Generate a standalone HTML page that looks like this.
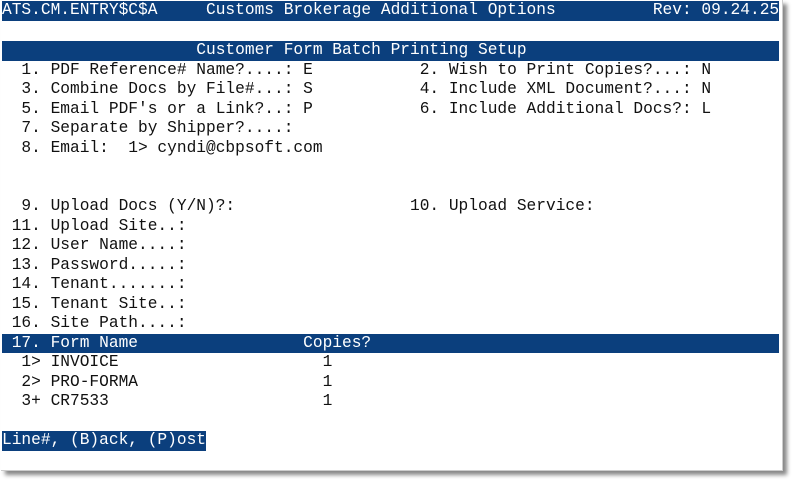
<!DOCTYPE html>
<html><head><meta charset="utf-8"><style>
html,body{margin:0;padding:0;background:#fff;width:792px;height:480px;overflow:hidden}
#win{position:absolute;left:1px;top:0;width:781px;height:470px;background:#fff;box-shadow:4px 4px 4px #888;border-right:1px solid #ccc;border-bottom:1px solid #ccc}
pre{position:absolute;left:2px;margin:0;font-family:"Liberation Mono",monospace;font-size:16.2px;line-height:19.55px;height:19.55px;color:#111;white-space:pre}
.bar{background:#0b3f7d;color:#fff;width:777px}
.b2{background:#0b3f7d;color:#fff}
</style></head><body><div id="win"></div>
<pre class="bar" style="top:1px">ATS.CM.ENTRY$C$A     Customs Brokerage Additional Options          Rev: 09.24.25</pre>
<pre class="bar" style="top:41px">                    Customer Form Batch Printing Setup</pre>
<pre style="top:60.5px">  1. PDF Reference# Name?....: E           2. Wish to Print Copies?...: N</pre>
<pre style="top:80px">  3. Combine Docs by File#...: S           4. Include XML Document?...: N</pre>
<pre style="top:99.5px">  5. Email PDF's or a Link?..: P           6. Include Additional Docs?: L</pre>
<pre style="top:119px">  7. Separate by Shipper?....:</pre>
<pre style="top:138.5px">  8. Email:  1> cyndi@cbpsoft.com</pre>
<pre style="top:197px">  9. Upload Docs (Y/N)?:                  10. Upload Service:</pre>
<pre style="top:216.5px"> 11. Upload Site..:</pre>
<pre style="top:236px"> 12. User Name....:</pre>
<pre style="top:255.5px"> 13. Password.....:</pre>
<pre style="top:275px"> 14. Tenant.......:</pre>
<pre style="top:294.5px"> 15. Tenant Site..:</pre>
<pre style="top:314px"> 16. Site Path....:</pre>
<pre class="bar" style="top:333.5px"> 17. Form Name                 Copies?</pre>
<pre style="top:353px">  1> INVOICE                     1</pre>
<pre style="top:372.5px">  2> PRO-FORMA                   1</pre>
<pre style="top:392px">  3+ CR7533                      1</pre>
<pre class="b2" style="top:431px">Line#, (B)ack, (P)ost</pre>
</body></html>
